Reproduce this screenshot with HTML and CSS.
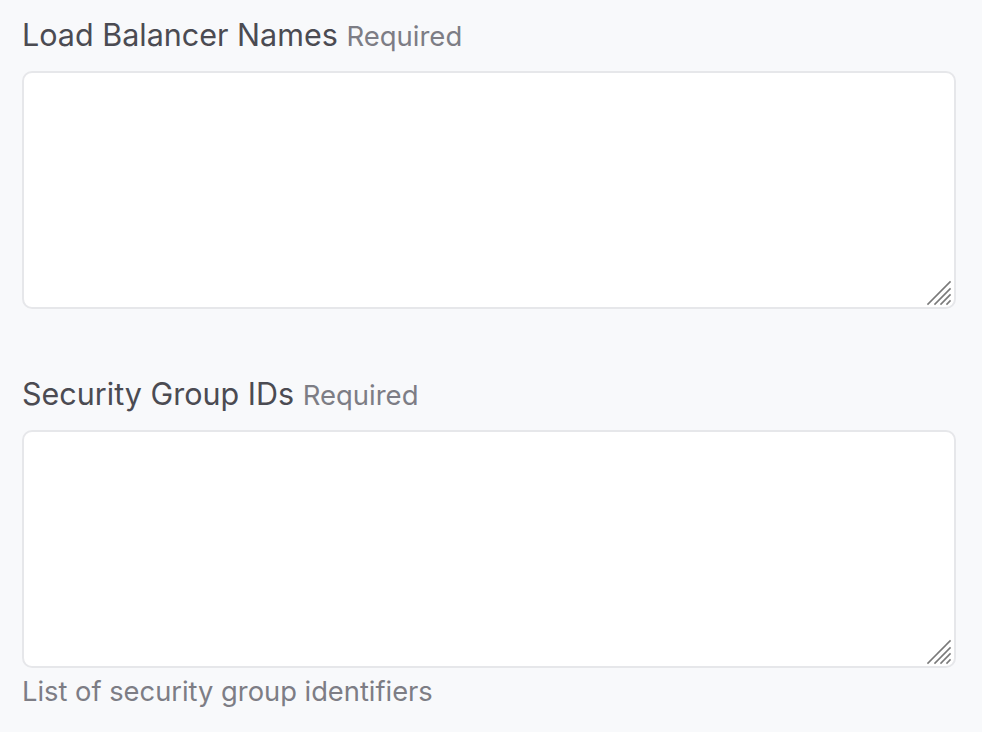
FILE: index.html
```html
<!DOCTYPE html>
<html>
<head>
<meta charset="utf-8">
<link rel="stylesheet" href="styles.css">
</head>
<body>
  <form class="form">
    <div class="field">
      <label class="label" for="lb">Load Balancer Names <span class="req">Required</span></label>
      <div class="area-wrap">
        <textarea id="lb" class="area"></textarea>
        <svg class="grip" width="26" height="26" viewBox="0 0 26 26"><g stroke="#7a7a7a" stroke-width="1.6" stroke-linecap="square"><line x1="2" y1="24" x2="24" y2="2"/><line x1="9" y1="24" x2="24" y2="9"/><line x1="15" y1="24" x2="24" y2="15"/><line x1="21" y1="24" x2="24" y2="21"/></g></svg>
      </div>
    </div>
    <div class="field">
      <label class="label" for="sg">Security Group IDs <span class="req">Required</span></label>
      <div class="area-wrap">
        <textarea id="sg" class="area"></textarea>
        <svg class="grip" width="26" height="26" viewBox="0 0 26 26"><g stroke="#7a7a7a" stroke-width="1.6" stroke-linecap="square"><line x1="2" y1="24" x2="24" y2="2"/><line x1="9" y1="24" x2="24" y2="9"/><line x1="15" y1="24" x2="24" y2="15"/><line x1="21" y1="24" x2="24" y2="21"/></g></svg>
      </div>
      <p class="help">List of security group identifiers</p>
    </div>
  </form>
</body>
</html>
```
FILE: styles.css
```css
html, body {
  margin: 0;
  background: #f8f9fb;
}
body {
  font-family: Inter, "Noto Sans", sans-serif;
  padding: 16px 26px 0 22px;
}
.form {
  display: flex;
  flex-direction: column;
  gap: 66px;
}
.field {
  display: flex;
  flex-direction: column;
}
.label {
  font-size: 30.5px;
  line-height: 38px;
  color: #4b4b52;
  margin-bottom: 16px;
}
.req {
  font-size: 27.5px;
  color: #7d7d85;
}
.area-wrap {
  position: relative;
}
.area {
  display: block;
  box-sizing: border-box;
  width: 100%;
  height: 238px;
  border: 2px solid #e6e7ea;
  border-radius: 10px;
  background: #fff;
  resize: none;
  font: inherit;
}
.grip {
  position: absolute;
  right: 4px;
  bottom: 3px;
}
.help {
  margin: 6px 0 0;
  font-size: 27.3px;
  line-height: 36px;
  color: #7d7d85;
}
```
